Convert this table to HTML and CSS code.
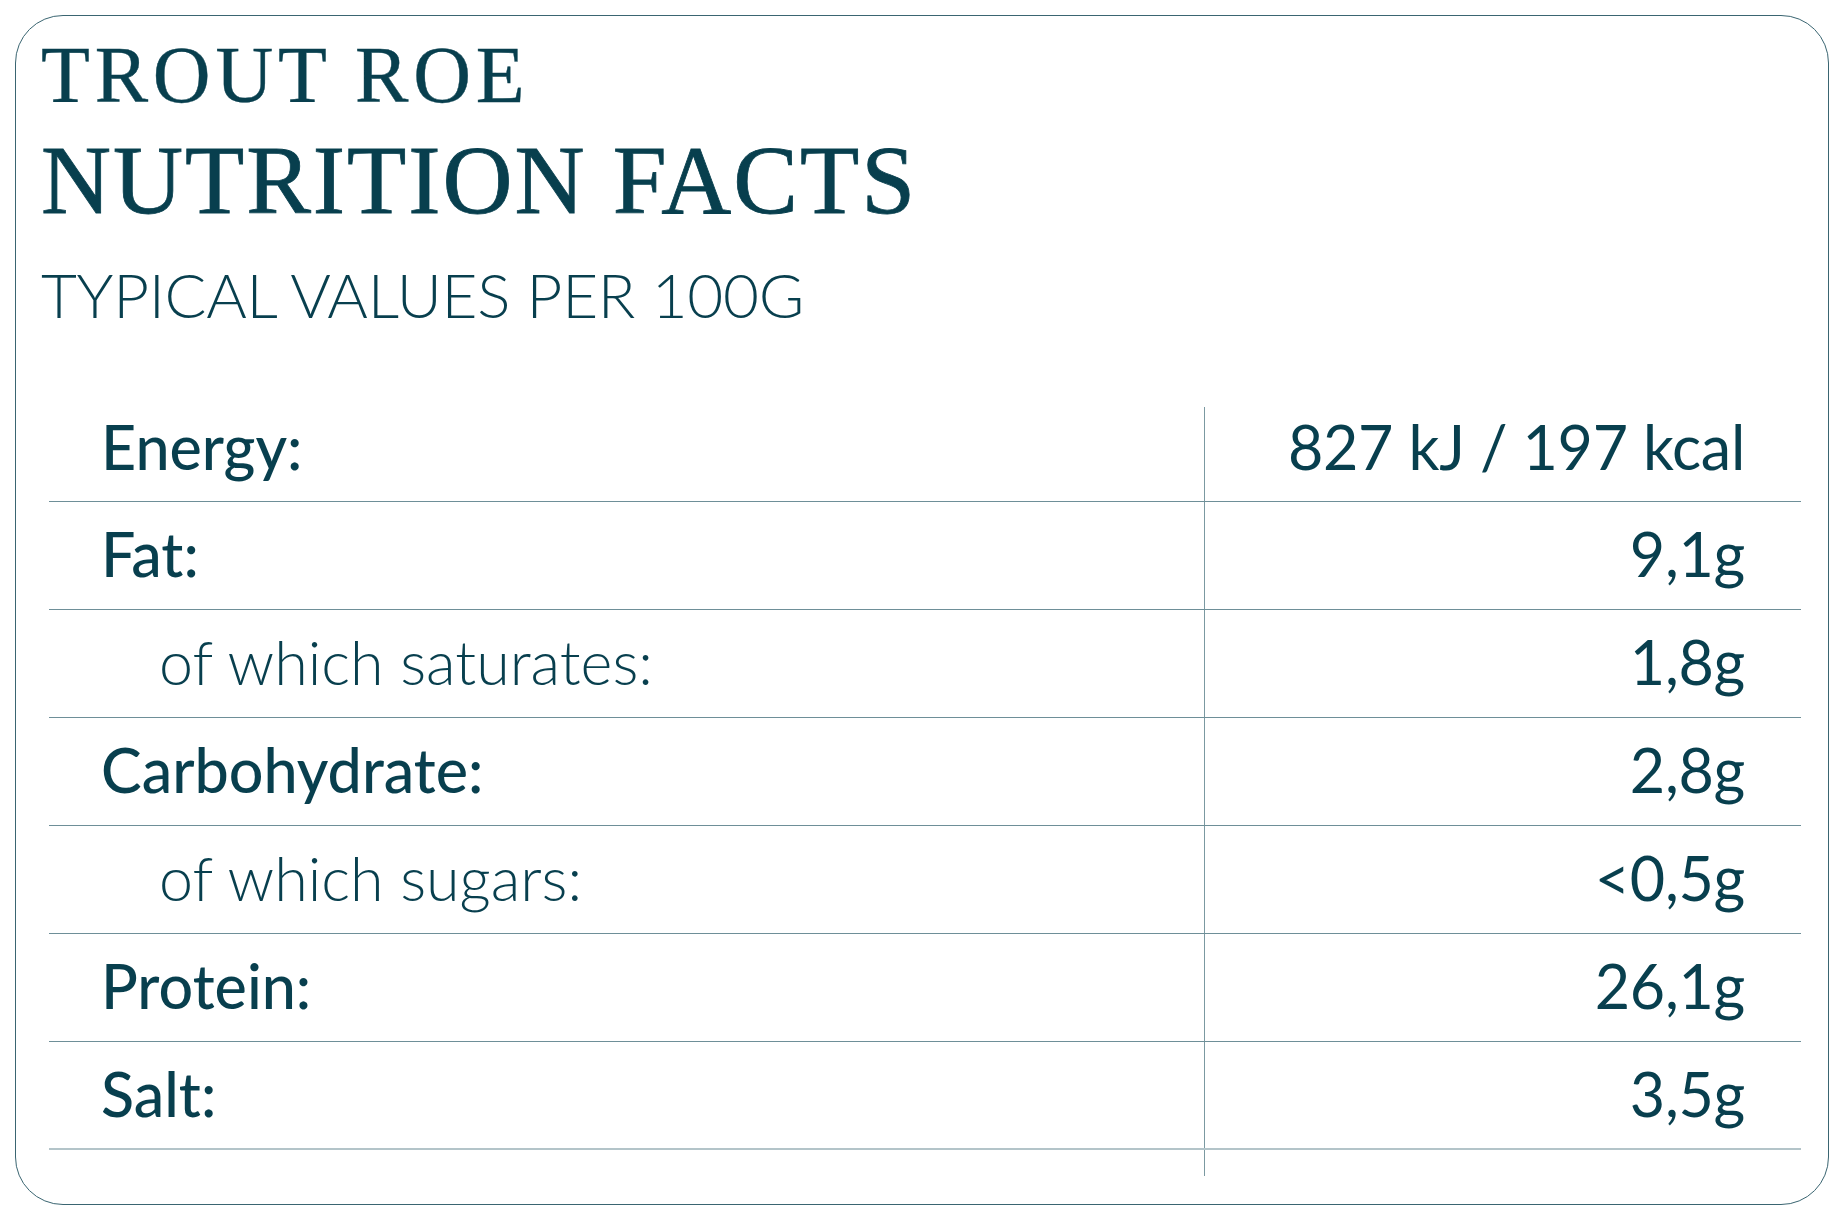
FILE: index.html
```html
<!DOCTYPE html>
<html lang="en">
<head>
<meta charset="utf-8">
<title>Trout Roe Nutrition Facts</title>
<link rel="stylesheet" href="styles.css">
</head>
<body>
<div class="card">
  <header class="head">
    <h1 class="product">TROUT ROE</h1>
    <h2 class="title">NUTRITION FACTS</h2>
    <p class="per">TYPICAL VALUES PER 100G</p>
  </header>
  <div class="table">
    <div class="row first"><div class="label">Energy:</div><div class="value">827 kJ / 197 kcal</div></div>
    <div class="row"><div class="label">Fat:</div><div class="value">9,1g</div></div>
    <div class="row"><div class="label sub">of which saturates:</div><div class="value">1,8g</div></div>
    <div class="row"><div class="label">Carbohydrate:</div><div class="value">2,8g</div></div>
    <div class="row"><div class="label sub">of which sugars:</div><div class="value">&lt;0,5g</div></div>
    <div class="row"><div class="label">Protein:</div><div class="value">26,1g</div></div>
    <div class="row last"><div class="label">Salt:</div><div class="value">3,5g</div></div>
  </div>
</div>
</body>
</html>
```
FILE: styles.css
```css
html, body {
  margin: 0;
  padding: 0;
  background: #ffffff;
}
body {
  padding: 15px 15px 14px 15px;
  color: #083f4e;
}
.card {
  box-sizing: border-box;
  width: 1814px;
  height: 1190px;
  border: 1.5px solid #3a6571;
  border-radius: 48px;
  display: flex;
  flex-direction: column;
}
.head {
  padding: 19px 0 0 25px;
}
.product {
  margin: 0;
  font-family: "Liberation Serif", serif;
  font-weight: 400;
  font-size: 80px;
  line-height: 80px;
  letter-spacing: 0.06em;
  -webkit-text-stroke: 0.4px #083f4e;
}
.title {
  margin: 17px 0 0 0;
  font-family: "Liberation Serif", serif;
  font-weight: 400;
  font-size: 97px;
  line-height: 97px;
  letter-spacing: 0.02em;
  -webkit-text-stroke: 0.8px #083f4e;
}
.per {
  margin: 34px 0 0 0;
  font-family: Lato, "Noto Sans", sans-serif;
  font-weight: 300;
  font-size: 62px;
  line-height: 62px;
  letter-spacing: -0.3px;
}
.table {
  margin: 71px 27px 0 33px;
  padding-bottom: 26px;
  background-image: linear-gradient(#7b99a1, #7b99a1);
  background-repeat: no-repeat;
  background-size: 1px calc(100% - 11px);
  background-position: 1155px 11px;
}
.row {
  box-sizing: border-box;
  height: 108px;
  display: grid;
  grid-template-columns: 1155px 1fr;
  border-bottom: 1px solid #6e8f98;
  padding-top: 15px;
  font-family: Lato, "Noto Sans", sans-serif;
  font-size: 61px;
  line-height: 73px;
}
.row.first {
  height: 106px;
  padding-top: 14px;
}
.row.last {
  border-bottom: 2px solid #b3c4c9;
}
.label {
  padding-left: 52px;
  font-weight: 500;
}
.label.sub {
  padding-left: 110px;
  font-weight: 300;
}
.value {
  text-align: right;
  padding-right: 56px;
  font-weight: 400;
  letter-spacing: -0.3px;
}
```
